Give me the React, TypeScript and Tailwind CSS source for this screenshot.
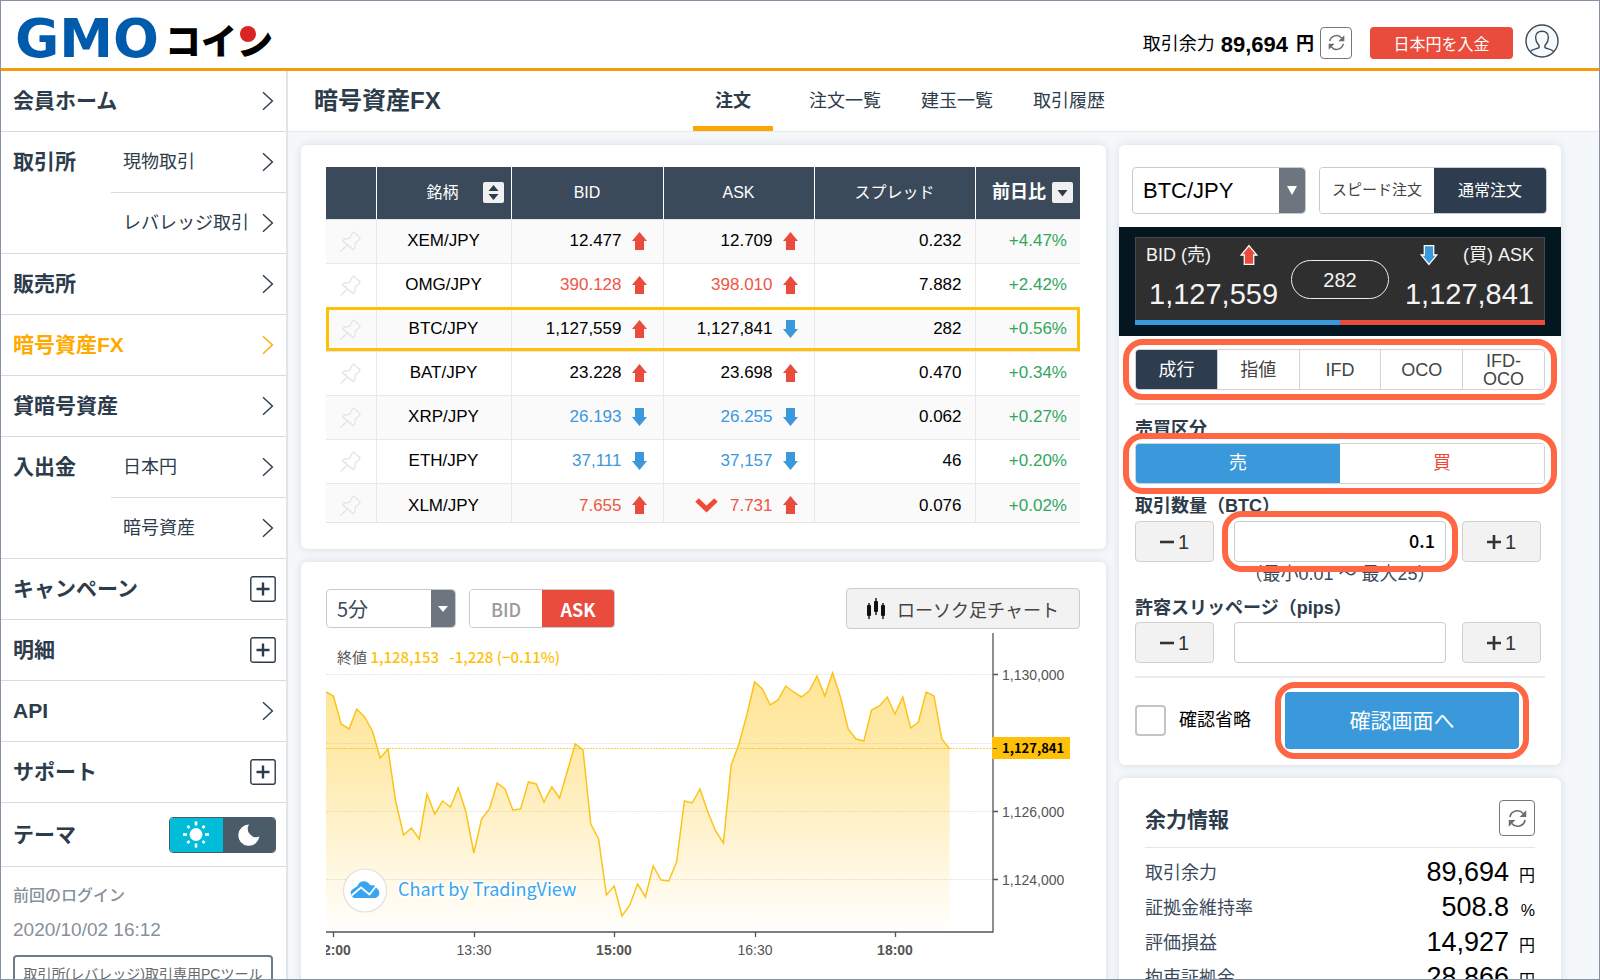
import { useState } from 'react';
import type { ReactNode } from 'react';
import clsx from 'clsx';

type Direction = 'up' | 'down';

interface Quote {
  pair: string;
  bid: string;
  bidDir: Direction;
  ask: string;
  askDir: Direction;
  tone?: Direction;
  falling?: boolean;
  spread: string;
  change: string;
}

const quotes: Quote[] = [
  { pair: 'XEM/JPY', bid: '12.477', bidDir: 'up', ask: '12.709', askDir: 'up', spread: '0.232', change: '+4.47%' },
  { pair: 'OMG/JPY', bid: '390.128', bidDir: 'up', ask: '398.010', askDir: 'up', tone: 'up', spread: '7.882', change: '+2.42%' },
  { pair: 'BTC/JPY', bid: '1,127,559', bidDir: 'up', ask: '1,127,841', askDir: 'down', spread: '282', change: '+0.56%' },
  { pair: 'BAT/JPY', bid: '23.228', bidDir: 'up', ask: '23.698', askDir: 'up', spread: '0.470', change: '+0.34%' },
  { pair: 'XRP/JPY', bid: '26.193', bidDir: 'down', ask: '26.255', askDir: 'down', tone: 'down', spread: '0.062', change: '+0.27%' },
  { pair: 'ETH/JPY', bid: '37,111', bidDir: 'down', ask: '37,157', askDir: 'down', tone: 'down', spread: '46', change: '+0.20%' },
  { pair: 'XLM/JPY', bid: '7.655', bidDir: 'up', ask: '7.731', askDir: 'up', tone: 'up', falling: true, spread: '0.076', change: '+0.02%' },
];

interface MenuEntry {
  label: string;
  kind: 'link' | 'expand';
  active?: boolean;
  children?: string[];
}

const menu: MenuEntry[] = [
  { label: '会員ホーム', kind: 'link' },
  { label: '取引所', kind: 'link', children: ['現物取引', 'レバレッジ取引'] },
  { label: '販売所', kind: 'link' },
  { label: '暗号資産FX', kind: 'link', active: true },
  { label: '貸暗号資産', kind: 'link' },
  { label: '入出金', kind: 'link', children: ['日本円', '暗号資産'] },
  { label: 'キャンペーン', kind: 'expand' },
  { label: '明細', kind: 'expand' },
  { label: 'API', kind: 'link' },
  { label: 'サポート', kind: 'expand' },
];

const balances = [
  { label: '取引余力', value: '89,694', unit: '円' },
  { label: '証拠金維持率', value: '508.8', unit: '%' },
  { label: '評価損益', value: '14,927', unit: '円' },
  { label: '拘束証拠金', value: '28,866', unit: '円' },
];

// Closing prices, one per 5 minutes, as heights in the plot
const closes = [
  59, 63, 91, 96, 76, 84, 98, 125, 116, 169, 202, 195, 206, 161, 181, 168, 174, 155, 179, 220,
  186, 176, 150, 156, 177, 176, 149, 151, 169, 154, 165, 138, 111, 117, 191, 206, 262, 253, 283, 272,
  251, 264, 233, 247, 248, 229, 168, 170, 156, 179, 198, 210, 132, 111, 82, 49, 56, 72, 67, 53,
  59, 64, 58, 43, 63, 40, 64, 96, 106, 108, 77, 73, 64, 81, 64, 95, 89, 59, 63, 106, 116,
];

/* ---------- icons ---------- */

function Chevron() {
  return (
    <svg width="12" height="20" viewBox="0 0 12 20" fill="none" stroke="currentColor" strokeWidth="1.4">
      <path d="M1 1.2 L10.4 10 L1 18.8" />
    </svg>
  );
}

function PlusBox() {
  return (
    <svg width="26" height="26" viewBox="0 0 26 26" fill="none" stroke="#2d3c4b">
      <rect x="0.8" y="0.8" width="24.4" height="24.4" rx="2" strokeWidth="1.4" />
      <path d="M13 6.5 V19.5 M6.5 13 H19.5" strokeWidth="2.4" />
    </svg>
  );
}

function Refresh({ size }: { size: number }) {
  return (
    <svg width={size} height={size} viewBox="0 0 20 20" fill="none" stroke="#6b6b6b" strokeWidth="1.7">
      <path d="M2 8.4 A8 8 0 0 1 16 4.8" />
      <path d="M18 11.6 A8 8 0 0 1 4 15.2" />
      <path d="M19.2 1.4 V8.4 H12.2 Z" fill="#6b6b6b" stroke="none" />
      <path d="M0.8 18.6 V11.6 H7.8 Z" fill="#6b6b6b" stroke="none" />
    </svg>
  );
}

function Pin() {
  return (
    <svg width="21" height="21" viewBox="0 0 21 21" fill="none" stroke="#e6e6e6" strokeWidth="1.4" strokeLinejoin="round" strokeLinecap="round" className="mx-auto">
      <path d="M13.5 1 L20 6.600 L19.400 8.600 L15.600 11.500 L14.600 17.400 L13 18.600 L2.500 9.600 L4 8.200 L9.800 7.200 L12.200 2 Z" />
      <path d="M7.5 13.800 L1 20" />
    </svg>
  );
}

function Arrow({ dir, outlined }: { dir: Direction; outlined?: boolean }) {
  const d = dir === 'up'
    ? 'M7.5 0 L15 9 H12 V18 H3 V9 H0 Z'
    : 'M7.5 18 L15 9 H12 V0 H3 V9 H0 Z';
  return (
    <svg
      width={outlined ? 20 : 15}
      height={outlined ? 22 : 18}
      viewBox={outlined ? '-1.5 -1.5 18 21' : '0 0 15 18'}
      className="shrink-0"
    >
      <path d={d} fill={dir === 'up' ? '#e94b3c' : '#3a99da'} stroke={outlined ? '#fff' : 'none'} strokeWidth="1.2" />
    </svg>
  );
}

function UserIcon() {
  return (
    <svg width="34" height="34" viewBox="0 0 34 34" fill="none" stroke="#3b4a5a" strokeWidth="1.4">
      <circle cx="17" cy="17" r="16" fill="#f7fafc" />
      <path d="M5.2 27.6 C7 25.6 9.6 25.2 13.4 24 C14.6 23.4 14.4 22.2 13.6 21 C11.6 18.6 10.6 16 10.6 13.4 C10.6 9.6 13.2 7.2 17 7.2 C20.8 7.2 23.4 9.6 23.4 13.4 C23.4 16 22.4 18.6 20.4 21 C19.6 22.2 19.4 23.4 20.6 24 C24.4 25.2 27 25.6 28.8 27.6" />
    </svg>
  );
}

function Sun() {
  return (
    <svg width="26" height="27" viewBox="-13 -13 26 26" fill="#fff">
      <circle r="6.4" />
      {[0, 45, 90, 135, 180, 225, 270, 315].map(a => (
        <rect key={a} x="-1.3" y={a % 90 ? -12.2 : -13} width="2.6" height={a % 90 ? 3 : 4} transform={`rotate(${a})`} />
      ))}
    </svg>
  );
}

function Moon() {
  return (
    <svg width="22" height="22" viewBox="0 0 22 22" fill="#fff">
      <path d="M11 0.6 A10.6 10.6 0 1 0 21.4 12.6 A8.4 8.4 0 0 1 11 0.6 Z" />
    </svg>
  );
}

function Candles() {
  return (
    <svg width="18" height="22" viewBox="0 0 18 22" fill="#111">
      <rect x="0" y="7" width="4" height="11" rx="1" />
      <rect x="1.3" y="5" width="1.4" height="16" />
      <rect x="7" y="3" width="4" height="11" rx="1" />
      <rect x="8.3" y="0" width="1.4" height="17" />
      <rect x="14" y="7" width="4" height="11" rx="1" />
      <rect x="15.3" y="5" width="1.4" height="16" />
    </svg>
  );
}

function SortMark({ both }: { both?: boolean }) {
  return (
    <svg width="21" height="21" viewBox="0 0 21 21" className="shrink-0">
      <rect width="21" height="21" rx="2" fill="#f0f0f0" />
      {both ? (
        <path d="M10.5 3 L15.5 9 H5.5 Z M10.5 18 L15.5 12 H5.5 Z" fill="#2d3c4b" />
      ) : (
        <path d="M5.5 8 H15.5 L10.5 14.4 Z" fill="#2d3c4b" />
      )}
    </svg>
  );
}

/* ---------- small pieces ---------- */

function Card({ children, className }: { children: ReactNode; className?: string }) {
  return <section className={clsx('rounded-md bg-white shadow-[0_0_8px_rgba(60,80,100,0.16)]', className)}>{children}</section>;
}

function Ring({ className }: { className: string }) {
  return <span aria-hidden className={clsx('pointer-events-none absolute rounded-[20px] border-6 border-[#ff6644]', className)} />;
}

function Header() {
  return (
    <header className="flex h-[70px] items-center justify-between border-b-3 border-[#f79a0c] bg-white pr-10 pl-2">
      <a href="#" className="relative mt-2 flex items-center whitespace-nowrap" aria-label="GMOコイン">
        <span className="w-[156px] text-center font-['DejaVu_Sans',sans-serif] text-[54px] leading-[54px] font-bold text-[#005bac]">GMO</span>
        <span className="font-['Noto_Sans_CJK_JP',sans-serif] text-[36px] leading-[54px] font-black text-black">コイン</span>
        <svg width="16" height="16" viewBox="0 0 16 16" className="absolute top-3.5 right-[17px]">
          <circle cx="8" cy="8" r="8" fill="#d92423" />
        </svg>
      </a>
      <div className="flex items-center pt-4">
        <span className="pt-1 text-[18px]">取引余力</span>
        <span className="ml-1.5 pt-1 text-[22px] font-bold">89,694</span>
        <span className="ml-2 pt-1 text-[18px] font-bold">円</span>
        <button aria-label="更新" className="ml-1.5 flex h-8 w-8 items-center justify-center rounded-sm border border-[#777] bg-white">
          <Refresh size={17} />
        </button>
        <button className="ml-[18px] h-8 w-[143px] rounded-sm bg-[#e94b3c] pt-1 text-[16px] text-white">日本円を入金</button>
        <button aria-label="アカウント" className="mb-1 ml-3"><UserIcon /></button>
      </div>
    </header>
  );
}

function Sidebar() {
  return (
    <aside className="w-[287px] shrink-0 border-r-2 border-[#e2e5e8] bg-white text-[#2d3c4b]">
      <nav>
        {menu.map(entry => (
          <div key={entry.label} className="flex border-b border-[#d8dbde]">
            {entry.children ? (
              <>
                <span className="w-[110px] shrink-0 pl-3 text-[21px] leading-[60px] font-bold">{entry.label}</span>
                <ul className="flex-1 divide-y divide-[#d8dbde]">
                  {entry.children.map(child => (
                    <li key={child}>
                      <a href="#" className="flex h-[60px] items-center justify-between pr-3 pl-3 text-[18px]">
                        {child}
                        <Chevron />
                      </a>
                    </li>
                  ))}
                </ul>
              </>
            ) : (
              <a
                href="#"
                className={clsx(
                  'flex h-[60px] flex-1 items-center justify-between pl-3 text-[21px] font-bold',
                  entry.kind === 'link' ? 'pr-3' : 'pr-[10px]',
                  entry.active && 'text-[#ffaa00]',
                )}
              >
                {entry.label}
                {entry.kind === 'link' ? <Chevron /> : <PlusBox />}
              </a>
            )}
          </div>
        ))}
        <div className="flex h-16 items-center justify-between border-b border-[#d8dbde] pr-[10px] pl-3">
          <span className="text-[21px] font-bold">テーマ</span>
          <div className="flex h-9 w-[107px] overflow-hidden rounded-sm border border-[#4a5c68]">
            <button aria-label="ライト" className="flex flex-1 items-center justify-center bg-[#00bcd9]"><Sun /></button>
            <button aria-label="ダーク" className="flex flex-1 items-center justify-center bg-[#4a5c68]"><Moon /></button>
          </div>
        </div>
      </nav>
      <div className="px-3 pt-5 text-[#87919a]">
        <p className="text-[16px] leading-[18px] font-medium">前回のログイン</p>
        <p className="mt-4 text-[19px] leading-[18px]">2020/10/02 16:12</p>
        <a href="#" className="mt-4 mr-[1px] block rounded-sm border-2 border-[#6c7b89] pt-2 pb-3 text-center text-[14px] leading-[18px] whitespace-nowrap text-[#6a6a6a]">
          取引所(レバレッジ)取引専用PCツール
        </a>
      </div>
    </aside>
  );
}

function PageTabs() {
  return (
    <div className="flex h-[61px] items-stretch border-b border-[#e6eaed] bg-white pl-[26px] text-[#2d3c4b]">
      <h1 className="w-[379px] text-[24px] leading-[60px] font-bold">暗号資産FX</h1>
      <nav className="flex text-[18px] leading-[60px]">
        <a href="#" className="w-20 border-b-5 border-[#ffa500] text-center font-bold leading-[60px]">注文</a>
        <a href="#" className="ml-9">注文一覧</a>
        <a href="#" className="ml-10">建玉一覧</a>
        <a href="#" className="ml-10">取引履歴</a>
      </nav>
    </div>
  );
}

const toneClass = (tone?: Direction) =>
  tone === 'up' ? 'text-[#f05545]' : tone === 'down' ? 'text-[#3a99da]' : 'text-black';

function QuoteTable() {
  return (
    <Card className="pt-[22px] pr-[26px] pb-[26px] pl-[25px]">
      <div className="h-[356px] overflow-hidden border-b border-[#e4e4e4]">
        <table className="w-full table-fixed border-collapse text-[17px]">
          <colgroup>
            <col className="w-[50px]" />
            <col className="w-[135px]" />
            <col className="w-[152px]" />
            <col className="w-[151px]" />
            <col className="w-[161px]" />
            <col className="w-[105px]" />
          </colgroup>
          <thead>
            <tr className="h-[52px] bg-[#3b4a5a] text-[16px] text-white [&>th]:border-white [&>th]:p-0 [&>th]:font-normal [&>th:not(:last-child)]:border-r">
              <th />
              <th>
                <div className="flex items-center justify-end gap-6 pr-[7px]">銘柄<SortMark both /></div>
              </th>
              <th>BID</th>
              <th>ASK</th>
              <th>スプレッド</th>
              <th>
                <div className="flex items-center justify-end gap-1.5 pr-[7px] text-[18px] font-bold">前日比<SortMark /></div>
              </th>
            </tr>
          </thead>
          <tbody>
            {quotes.map(q => (
              <tr
                key={q.pair}
                className={clsx(
                  'h-11 border-t border-[#e8e8e8] odd:bg-[#fafafa] [&>td]:border-[#e8e8e8] [&>td]:p-0 [&>td:not(:last-child)]:border-r',
                  q.pair === 'BTC/JPY' && 'outline-3 -outline-offset-3 outline-[#ffc107]',
                )}
              >
                <td><Pin /></td>
                <td className="text-center">{q.pair}</td>
                <td>
                  <div className={clsx('flex items-center justify-end gap-2.5 pr-4', toneClass(q.tone))}>
                    {q.bid}<Arrow dir={q.bidDir} />
                  </div>
                </td>
                <td>
                  <div className={clsx('flex items-center justify-end gap-2.5 pr-4', toneClass(q.tone))}>
                    {q.falling && (
                      <svg width="23" height="15" viewBox="0 0 23 15" fill="none" stroke="#f04a36" strokeWidth="5" className="mr-0.5">
                        <path d="M2 2 L11.5 11 L21 2" />
                      </svg>
                    )}
                    {q.ask}<Arrow dir={q.askDir} />
                  </div>
                </td>
                <td className="text-right"><span className="pr-[13px]">{q.spread}</span></td>
                <td className="text-right text-[#34a55f]"><span className="pr-[13px]">{q.change}</span></td>
              </tr>
            ))}
          </tbody>
        </table>
      </div>
    </Card>
  );
}

function PriceChart() {
  const line = closes.map((y, i) => `${i === 0 ? 0 : (7.4 + (i - 1) * 7.8).toFixed(1)},${y}`).join(' ');
  const yTicks = [
    { y: 41, label: '1,130,000' },
    { y: 178, label: '1,126,000' },
    { y: 246, label: '1,124,000' },
  ];
  const xTicks = [
    { x: 7, label: '12:00', bold: true },
    { x: 148, label: '13:30', bold: false },
    { x: 288, label: '15:00', bold: true },
    { x: 429, label: '16:30', bold: false },
    { x: 569, label: '18:00', bold: true },
  ];
  return (
    <svg viewBox="0 0 754 346" className="block w-full">
      <defs>
        <linearGradient id="area" x1="0" y1="40" x2="0" y2="292" gradientUnits="userSpaceOnUse">
          <stop offset="0" stopColor="#ffc107" stopOpacity="0.42" />
          <stop offset="0.35" stopColor="#ffc107" stopOpacity="0.33" />
          <stop offset="1" stopColor="#ffc107" stopOpacity="0.02" />
        </linearGradient>
      </defs>
      {[41, 110, 178, 246].map(y => (
        <path key={y} d={`M0 ${y}.5 H667`} stroke="#e6e6e6" strokeDasharray="2 1" />
      ))}
      <polygon points={`0,299 ${line} 623.8,299`} fill="url(#area)" />
      <path d="M0 115.5 H667" stroke="#ffc107" strokeOpacity="0.75" strokeDasharray="2 1" />
      <polyline points={line} fill="none" stroke="#fcc419" strokeWidth="1.5" />
      <path d="M0 299 H667 V0 M667 41.5 h5 M667 178.5 h5 M667 246.5 h5" fill="none" stroke="#555" strokeWidth="1.3" />
      {yTicks.map(t => (
        <text key={t.y} x="676" y={t.y + 6} fontSize="14" fill="#555">{t.label}</text>
      ))}
      <rect x="666" y="104" width="78" height="22" fill="#ffc107" />
      <path d="M667 115.5 h4" stroke="#555" />
      <text x="676" y="120" fontSize="13" fontWeight="700" className="font-['Noto_Sans_CJK_JP',sans-serif]">1,127,841</text>
      {xTicks.map(t => (
        <g key={t.x}>
          <path d={`M${t.x}.5 299 v5`} stroke="#555" strokeWidth="1.3" />
          <text x={t.x} y="322" fontSize="14" fontWeight={t.bold ? 700 : 400} fill="#555" textAnchor="middle">{t.label}</text>
        </g>
      ))}
      <circle cx="39" cy="257.5" r="21.5" fill="#fff" stroke="#e4e0dc" strokeWidth="1.2" />
      <path d="M28 265 C24 263 23.500 258 27 256 L31.500 253 C33 247.500 41 246.500 44 252 L48.500 252.500 L51 255.500 C54.500 258 54 263.500 49.500 265 Z" fill="#37a6ef" />
      <path d="M25.500 262.500 L35 254.500 L43.500 261.500 L50.500 252.500" fill="none" stroke="#fff" strokeWidth="1.8" />
      <text
        x="72" y="263" fontSize="18" fontWeight="400" fill="#37a6ef" stroke="#fff" strokeWidth="3" paintOrder="stroke"
        className="font-['Noto_Sans_CJK_JP',sans-serif]"
      >
        Chart by TradingView
      </text>
    </svg>
  );
}

function ChartPanel() {
  const [side, setSide] = useState('ASK');
  return (
    <Card className="pt-[26px] pr-[26px] pb-10 pl-[25px]">
      <div className="flex items-center font-['Noto_Sans_CJK_JP',sans-serif]">
        <div className="relative h-[39px] w-[130px]">
          <select aria-label="足種" className="h-full w-full appearance-none rounded-sm border border-[#c8cbce] bg-white pl-2.5 text-[20px] leading-[24px] text-[#3b4a5a]">
            <option>5分</option>
          </select>
          <span className="pointer-events-none absolute inset-y-px right-px flex w-6 items-center justify-center rounded-r-sm bg-[#6d767e]">
            <svg width="10" height="6" viewBox="0 0 10 6" fill="#fff"><path d="M0 0 H10 L5 6 Z" /></svg>
          </span>
        </div>
        <div className="ml-[13px] flex h-[39px] w-[146px] overflow-hidden rounded-sm border border-[#c8cbce]">
          {['BID', 'ASK'].map(s => (
            <button
              key={s}
              onClick={() => setSide(s)}
              className={clsx('flex-1 text-[18px] leading-[24px]', side === s ? 'bg-[#e94b3c] font-bold text-white' : 'bg-white font-medium text-[#9a9a9a]')}
            >
              {s}
            </button>
          ))}
        </div>
        <button className="ml-auto flex h-[41px] w-[234px] items-center justify-center gap-3 rounded-sm border border-[#ccc] bg-[#f2f2f2] text-[18px] leading-[24px] text-[#444]">
          <Candles />
          ローソク足チャート
        </button>
      </div>
      <div className="relative mt-1">
        <p className="absolute top-3 left-[11px] font-['Noto_Sans_CJK_JP',sans-serif] text-[15px] leading-[24px] whitespace-pre text-[#555]">
          終値 <span className="font-medium text-[#ffc107]">1,128,153   -1,228 (−0.11%)</span>
        </p>
        <PriceChart />
      </div>
    </Card>
  );
}

function Stepper({ id, value, ring }: { id: string; value: string; ring?: boolean }) {
  const button = 'flex h-[41px] w-[79px] shrink-0 items-center justify-center gap-1 rounded-sm border border-[#d0d0d0] bg-[#f2f2f2] text-[20px] text-[#333]';
  return (
    <div className="flex pr-1">
      <button className={button}>
        <svg width="14" height="14" viewBox="0 0 14 14" stroke="#333" strokeWidth="2.6"><path d="M0 7 H14" /></svg>
        1
      </button>
      <div className="relative mr-4 ml-5 flex-1">
        <input
          id={id}
          defaultValue={value}
          className="h-[41px] w-full rounded-sm border border-[#ccc] bg-white pr-2.5 pb-1 text-right font-['Noto_Sans_CJK_JP',sans-serif] text-[18px] font-medium text-black"
        />
        {ring && <Ring className="-inset-x-3 -inset-y-2.5" />}
      </div>
      <button className={button}>
        <svg width="14" height="14" viewBox="0 0 14 14" stroke="#333" strokeWidth="2.6"><path d="M0 7 H14 M7 0 V14" /></svg>
        1
      </button>
    </div>
  );
}

function OrderPanel() {
  const [orderType, setOrderType] = useState('成行');
  const [side, setSide] = useState('売');
  return (
    <Card>
      <div className="flex justify-between pt-[22px] pr-3.5 pb-[13px] pl-[13px]">
        <div className="relative h-[47px] w-[174px]">
          <select aria-label="銘柄" className="h-full w-full appearance-none rounded-sm border border-[#c8cbce] bg-white pl-2.5 text-[22px]">
            <option>BTC/JPY</option>
          </select>
          <span className="pointer-events-none absolute inset-y-px right-px flex w-[26px] items-center justify-center rounded-r-sm bg-[#6d767e]">
            <svg width="10" height="9" viewBox="0 0 10 9" fill="#fff"><path d="M0 0 H10 L5 9 Z" /></svg>
          </span>
        </div>
        <div className="flex h-[47px] w-[228px] overflow-hidden rounded-sm border border-[#c8cbce] text-[15px]">
          <button className="w-[114px] bg-white text-[#444]">スピード注文</button>
          <button className="flex-1 bg-[#2d3c4e] text-[16px] text-white">通常注文</button>
        </div>
      </div>

      <div className="bg-[#04161f] px-4 pt-2.5 pb-[11px] text-[#f4f4f4]">
        <div className="relative flex h-[83px] flex-col justify-between border border-b-0 border-[#4a4a4a] bg-[#2f2f2f] px-2.5 pt-1.5 pb-2.5">
          <div className="flex items-center justify-between text-[18px] leading-[20px]">
            <span className="flex items-center gap-7">BID (売)<Arrow dir="up" outlined /></span>
            <span className="flex items-center gap-6"><Arrow dir="down" outlined />(買) ASK</span>
          </div>
          <div className="flex justify-between pl-[3px] text-[29px] leading-[32px]">
            <span>1,127,559</span>
            <span>1,127,841</span>
          </div>
          <span className="absolute top-[22px] left-1/2 flex h-[39px] w-[98px] -translate-x-1/2 items-center justify-center rounded-full border border-[#eee] bg-[#2f2f2f] text-[20px]">
            282
          </span>
        </div>
        <div className="flex h-[5px]">
          <span className="flex-1 bg-[#3a99da]" />
          <span className="flex-1 bg-[#e94b3c]" />
        </div>
      </div>

      <div className="px-4 pt-[13px] pb-4 text-[18px] text-[#2d3c4b]">
        <div className="relative">
          <div className="flex h-[41px] divide-x divide-[#d0d3d6] overflow-hidden rounded-sm border border-[#d0d3d6]">
            {['成行', '指値', 'IFD', 'OCO', 'IFD-OCO'].map(t => (
              <button
                key={t}
                onClick={() => setOrderType(t)}
                className={clsx('flex-1 basis-0 px-3 leading-[18px]', orderType === t ? 'bg-[#2d3c4e] text-white' : 'bg-white text-[#444]')}
              >
                {t}
              </button>
            ))}
          </div>
          <Ring className="-inset-x-3 -inset-y-2.5" />
        </div>

        <hr className="mt-[13px] border-t-2 border-[#ececec]" />
        <p className="mt-3.5 leading-[20px] font-bold">売買区分</p>
        <div className="relative mt-1">
          <div className="flex h-[41px] overflow-hidden rounded-sm border border-[#d0d3d6]">
            <button onClick={() => setSide('売')} className={clsx('flex-1', side === '売' ? 'bg-[#3a99da] text-white' : 'bg-white text-[#3a99da]')}>売</button>
            <button onClick={() => setSide('買')} className={clsx('flex-1', side === '買' ? 'bg-[#e94b3c] text-white' : 'bg-white text-[#f04a36]')}>買</button>
          </div>
          <Ring className="-inset-x-3 -inset-y-2.5" />
        </div>

        <label htmlFor="amount" className="mt-3 mb-[5px] block leading-[20px] font-bold">取引数量（BTC）</label>
        <Stepper id="amount" value="0.1" ring />
        <p className="mt-0.5 text-center leading-[20px] text-[#3b4a5a]">（最小0.01 〜 最大25）</p>

        <label htmlFor="slippage" className="mt-3.5 mb-1 block leading-[20px] font-bold">許容スリッページ（pips）</label>
        <Stepper id="slippage" value="" />

        <hr className="mt-[13px] border-t-2 border-[#ececec]" />
        <div className="mt-3.5 flex items-center justify-between pr-[26px]">
          <label className="flex items-center gap-[13px] text-black">
            <input type="checkbox" className="h-[31px] w-[31px] appearance-none rounded-sm border-2 border-[#c4c4c4] bg-white checked:bg-[#3a99da]" />
            確認省略
          </label>
          <div className="relative">
            <button className="h-[57px] w-[234px] rounded-sm bg-[#3a99da] text-[21px] text-white">確認画面へ</button>
            <Ring className="-inset-2.5" />
          </div>
        </div>
      </div>
    </Card>
  );
}

function BalancePanel() {
  return (
    <Card className="px-[26px] pt-[22px] pb-10 text-[#3b4a5a]">
      <div className="flex items-center justify-between border-b border-[#e6e6e6] pb-[11px]">
        <h2 className="pt-1 text-[21px] font-bold text-[#2d3c4b]">余力情報</h2>
        <button aria-label="更新" className="flex h-9 w-9 items-center justify-center rounded-sm border border-[#777] bg-white">
          <Refresh size={19} />
        </button>
      </div>
      <dl className="pt-2">
        {balances.map(b => (
          <div key={b.label} className="flex h-[35px] items-center justify-between text-[18px]">
            <dt>{b.label}</dt>
            <dd className="text-[27px] leading-[35px] text-black">
              {b.value}
              <span className="ml-2.5 inline-block w-4 text-right text-[16px]">{b.unit}</span>
            </dd>
          </div>
        ))}
      </dl>
    </Card>
  );
}

export default function App() {
  return (
    <div className="flex h-screen flex-col overflow-hidden border border-[#8592a6] bg-[#f4f8fb] font-['Liberation_Sans','Noto_Sans_CJK_JP',sans-serif] text-black">
      <Header />
      <div className="flex min-h-0 flex-1">
        <Sidebar />
        <main className="min-w-0 flex-1">
          <PageTabs />
          <div className="grid grid-cols-[minmax(0,1fr)_442px] gap-[13px] pt-[13px] pr-[38px] pl-[13px]">
            <div className="flex flex-col gap-[13px]">
              <QuoteTable />
              <ChartPanel />
            </div>
            <div className="flex flex-col gap-[13px]">
              <OrderPanel />
              <BalancePanel />
            </div>
          </div>
        </main>
      </div>
    </div>
  );
}
